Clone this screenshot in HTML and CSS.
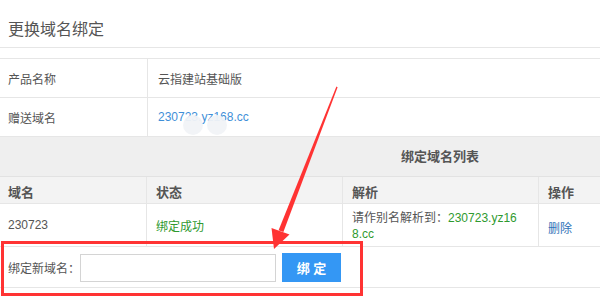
FILE: index.html
```html
<!DOCTYPE html>
<html lang="zh-CN">
<head>
  <meta charset="UTF-8" />
  <title>更换域名绑定</title>
  <link rel="stylesheet" href="styles.css">
</head>
<body>
  <div class="page">
    <h3 class="title">更换域名绑定</h3>

    <div class="info">
      <div class="info-row">
        <div class="label">产品名称</div>
        <div class="value">云指建站基础版</div>
      </div>
      <div class="info-row">
        <div class="label">赠送域名</div>
        <div class="value"><a class="link" href="#">230723.yz168.cc</a></div>
      </div>
    </div>

    <div class="list">
      <div class="list-title">绑定域名列表</div>
      <div class="list-row list-head">
        <div class="cell first">域名</div>
        <div class="cell">状态</div>
        <div class="cell">解析</div>
        <div class="cell">操作</div>
      </div>
      <div class="list-row list-data">
        <div class="cell first">230723</div>
        <div class="cell ok">绑定成功</div>
        <div class="cell resolve">请作别名解析到：<span class="ok">230723.yz16<br>8.cc</span></div>
        <div class="cell"><a class="del" href="#">删除</a></div>
      </div>
      <div class="bind-row">
        <label class="bind-label" for="newDomain">绑定新域名：</label>
        <input id="newDomain" class="bind-input" type="text" />
        <button class="bind-btn">绑 定</button>
      </div>
    </div>

    <!-- 标注 -->
    <span class="blur blur-a"></span>
    <span class="blur blur-b"></span>
    <div class="mark-box"></div>
    <svg class="mark-arrow" width="600" height="301" viewBox="0 0 600 301">
      <polygon points="336.4,86.6 337.6,87.2 283.4,232 278.6,230.2" fill="#ff3333" />
      <polygon points="271.5,228 289.5,234.6 274,249" fill="#ff3333" />
    </svg>
  </div>
</body>
</html>
```

FILE: styles.css
```css
body { margin: 0; overflow: hidden; background: #fff; font-family: "Liberation Sans", "Noto Sans CJK SC", sans-serif; font-size: 12px; color: #555; }
.page { position: relative; width: 600px; height: 301px; overflow: hidden; }

.title { margin: 0 0 10px; padding: 20px 0 0 8px; height: 27px; line-height: 20px; font-size: 16px; font-weight: normal; color: #555; border-bottom: 1px solid #e6e6e6; }

.info { border-top: 1px solid #e6e6e6; }
.info-row { display: flex; height: 38px; border-bottom: 1px solid #e6e6e6; }
.label { width: 139px; padding-left: 8px; display: flex; align-items: center; border-right: 1px solid #e6e6e6; }
.value { flex: 1; padding-left: 10px; display: flex; align-items: center; }
.link { color: #3f8fd8; text-decoration: none; }

.list { background: #fff; }
/* 表格实际宽 880，标题居中于 440 */
.list-title { height: 39px; line-height: 39px; padding-left: 280px; text-align: center; background: #efefef; font-weight: bold; font-size: 13px; color: #555; border-bottom: 1px solid #e2e2e2; }
.list-row { display: grid; grid-template-columns: 147px 196px 196px 1fr; border-bottom: 1px solid #e6e6e6; }
.list-head { height: 26px; background: #f3f3f3; font-weight: bold; font-size: 13px; }
.list-data { height: 42px; }
.cell { padding-left: 9px; display: flex; align-items: center; border-right: 1px solid #e6e6e6; }
.list-head .cell { padding-top: 2px; }
.cell.first { padding-left: 8px; }
.cell:last-child { border-right: none; }
.resolve { display: block; padding-top: 6px; line-height: 16px; }
.ok { color: #2f9a2f; }
.del { color: #2f72b8; text-decoration: none; padding-top: 4px; }

.bind-row { display: flex; align-items: center; height: 40px; padding-left: 8px; border-bottom: 1px solid #e6e6e6; }
.bind-input { box-sizing: border-box; width: 196px; height: 28px; margin: 1px 0 0 0; padding: 0 6px; border: 1px solid #d4d4d4; }
.bind-btn { box-sizing: border-box; width: 59px; height: 29px; margin: 1px 0 0 6px; border: none; background: #3497f4; color: #fff; font-family: inherit; font-size: 13px; font-weight: bold; cursor: pointer; }

.blur { position: absolute; top: 115px; width: 20px; height: 20px; border-radius: 50%; background: #f1f3f7; opacity: 0.95; }
.blur-a { left: 183px; }
.blur-b { left: 207px; }
.mark-box { position: absolute; left: 1px; top: 241px; width: 362px; height: 55px; box-sizing: border-box; border: 3px solid #ff3333; }
.mark-arrow { position: absolute; left: 0; top: 0; }
```
